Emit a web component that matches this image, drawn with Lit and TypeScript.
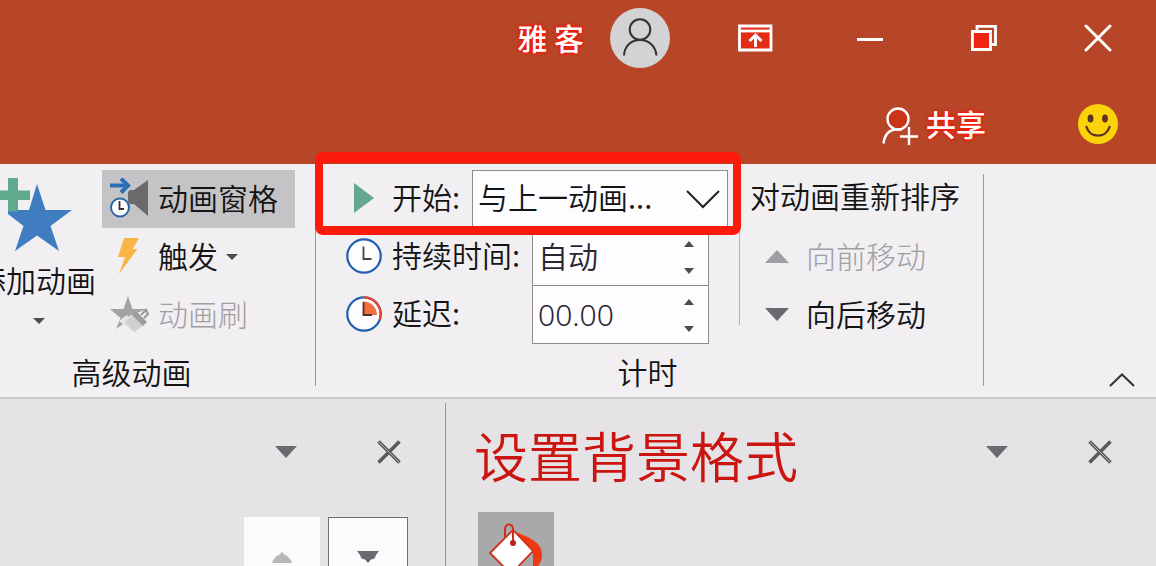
import { LitElement, html, css, svg } from "lit";
import { customElement, property } from "lit/decorators.js";

const triangle = (dir: "up" | "down", w: number, h: number) => html`
  <svg width=${w} height=${h} viewBox="0 0 20 10" preserveAspectRatio="none" aria-hidden="true">
    ${dir === "up"
      ? svg`<path d="M0 10 L10 0 L20 10Z" fill="currentColor"/>`
      : svg`<path d="M0 0 H20 L10 10Z" fill="currentColor"/>`}
  </svg>`;

const crossIcon = html`
  <svg width="24" height="24" viewBox="0 0 24 24" fill="none" aria-hidden="true">
    <path d="M1.500 1.500 22.500 22.500 M22.500 1.500 1.500 22.500" stroke="#5a5a5a" stroke-width="3.600"/>
    <path d="M2 2 22 22" stroke="#b4b4b4" stroke-width="1"/>
  </svg>`;

const base = css`
  * { box-sizing: border-box; }
  button, input, select {
    font: inherit;
    color: inherit;
    margin: 0;
    padding: 0;
    border: 0;
    border-radius: 0;
    background: none;
  }
  svg { display: block; flex: none; }
`;

@customElement("title-bar")
class TitleBar extends LitElement {
  static styles = [base, css`
    :host { display: block; background: #b74628; color: #fff; }
    .row { display: flex; align-items: center; justify-content: flex-end; }
    .window { height: 76px; padding-right: 1px; }
    .tools { height: 88px; padding: 8px 38px 0 0; align-items: center; }
    .name, .share-text {
      padding-bottom: 3px;
      font-weight: 500;
      text-shadow: 0 0 2px #ff1400, 0 0 3px #ff1400, 0 0 4px #ff1400;
      white-space: nowrap;
    }
    .name { margin-right: 26px; }
    .avatar {
      width: 60px;
      height: 60px;
      margin-right: 29px;
      border-radius: 50%;
      background: #d3d3d5;
    }
    .control {
      width: 114px;
      height: 76px;
      display: flex;
      align-items: center;
      justify-content: center;
    }
    .share { display: flex; align-items: center; gap: 8px; margin-right: 92px; }
    .share svg { margin-top: 4px; }
  `];

  render() {
    return html`
      <div class="row window">
        <span class="name">雅 客</span>
        <button class="avatar" aria-label="帐户">
          <svg width="60" height="60" viewBox="0 0 60 60" fill="none" stroke="#333" stroke-width="2">
            <circle cx="30" cy="21.500" r="10.300"/>
            <path d="M14 47.500C14.500 38 21 32 30 32S45.500 38 46.500 47.500"/>
          </svg>
        </button>
        <button class="control" aria-label="功能区显示选项">
          <svg width="36" height="28" viewBox="0 0 36 28" fill="none" stroke="#fff" stroke-width="2.800">
            <path d="M1.500 2H33V26H1.500Z" fill="#e22c14"/>
            <path d="M2 7H33"/>
            <path d="M17.500 23V11 M11.500 17 17.500 11 23.500 17" stroke-width="3"/>
          </svg>
        </button>
        <button class="control" aria-label="最小化">
          <svg width="28" height="28" viewBox="0 0 28 28"><path d="M1 15.500H27" stroke="#fff" stroke-width="3"/></svg>
        </button>
        <button class="control" aria-label="还原">
          <svg width="28" height="28" viewBox="0 0 28 28" fill="none" stroke="#fff" stroke-width="2.800">
            <path d="M7 6V2.400H25.500V20.500H22"/>
            <path d="M2.400 7.500H20.500V25.500H2.400Z" fill="#ec2410"/>
          </svg>
        </button>
        <button class="control" aria-label="关闭">
          <svg width="28" height="28" viewBox="0 0 28 28"><path d="M2 2 26 26M26 2 2 26" stroke="#fff" stroke-width="3" stroke-linecap="round"/></svg>
        </button>
      </div>
      <div class="row tools">
        <button class="share">
          <svg width="36" height="40" viewBox="0 0 36 40" fill="none" stroke="#fff" stroke-width="2.400">
            <circle cx="16" cy="13" r="10.500" fill="#cc3418"/>
            <path d="M1.500 37.500C2.500 29 7 24 14 23.500H20"/>
            <path d="M27 21V39M18 30.500H36"/>
          </svg>
          <span class="share-text">共享</span>
        </button>
        <svg width="40" height="40" viewBox="0 0 40 40" role="img" aria-label="反馈">
          <circle cx="20" cy="20" r="20" fill="#fcd208"/>
          <ellipse cx="12.500" cy="14.500" rx="2.900" ry="4" fill="#5b3226"/>
          <ellipse cx="27" cy="14.500" rx="2.900" ry="4" fill="#5b3226"/>
          <path d="M8.500 23C12 34.500 28 34.500 31.500 23" fill="none" stroke="#5b3226" stroke-width="2.400" stroke-linecap="round"/>
        </svg>
      </div>`;
  }
}

@customElement("spin-field")
class SpinField extends LitElement {
  @property() label = "";
  @property() value = "";

  static styles = [base, css`
    :host { display: block; }
    .row { display: flex; align-items: center; height: 58px; }
    .icon { width: 36px; margin: 0 10px 2px 0; }
    .text { width: 140px; padding-bottom: 7px; white-space: nowrap; }
    .box {
      display: flex;
      align-self: flex-start;
      width: 177px;
      height: 59px;
      margin-top: -1px;
      border: 1px solid #8c8c8e;
      background: #fdfcfe;
    }
    .input {
      flex: 1;
      min-width: 0;
      padding: 1px 0 0 5px;
      font-family: "Noto Sans", "Noto Sans CJK SC", sans-serif;
      color: #2a2530;
      outline: none;
    }
    .steps { width: 38px; padding-top: 2px; display: flex; flex-direction: column; color: #4c4c4e; }
    .step { flex: 1; display: flex; align-items: center; justify-content: center; }
  `];

  render() {
    return html`
      <div class="row">
        <span class="icon"><slot></slot></span>
        <label class="text" for="field">${this.label}</label>
        <div class="box">
          <input class="input" id="field" .value=${this.value} />
          <div class="steps">
            <button class="step" aria-label="增加">${triangle("up", 10, 6)}</button>
            <button class="step" aria-label="减少">${triangle("down", 10, 6)}</button>
          </div>
        </div>
      </div>`;
  }
}

@customElement("ribbon-bar")
class RibbonBar extends LitElement {
  static styles = [base, css`
    :host {
      display: flex;
      padding-top: 6px;
      background: #f1eff2;
      border-bottom: 2px solid #cbc9cc;
      color: #141414;
    }
    .group { display: flex; flex-direction: column; flex: none; }
    .advanced { margin-left: -50px; padding-left: 26px; }
    .body { display: flex; height: 174px; }
    .caption { height: 53px; padding: 5px 4px 0 0; line-height: 44px; text-align: center; }
    .advanced .caption { margin-left: -24px; }
    .divider { flex: none; width: 1px; margin: 4px 0 11px; background: #98979a; }
    .minor { margin: 4px 0 19px; background: #b4b2b6; }

    .add {
      width: 126px;
      display: flex;
      flex-direction: column;
      align-items: center;
      padding-top: 8px;
    }
    .add-text { align-self: flex-start; padding: 5px 0 17px; white-space: nowrap; }
    .stack { display: flex; flex-direction: column; margin-right: 20px; }
    .tool {
      display: flex;
      align-items: center;
      gap: 8px;
      width: 193px;
      height: 58px;
      padding: 0 0 4px 8px;
      white-space: nowrap;
    }
    .tool svg { margin-top: 4px; }
    .selected { background: #c4c3c5; }
    .disabled { color: #a09ea2; font-weight: 300; }
    .caret { color: #4c4c4e; }

    .timing { padding-left: 30px; width: 423px; position: relative; }
    .start { display: flex; align-items: center; height: 58px; }
    .slot { width: 36px; margin: 0 10px 2px 0; display: flex; justify-content: center; }
    .start-text { width: 80px; padding-bottom: 7px; white-space: nowrap; }
    .pick { display: grid; align-items: center; width: 256px; height: 58px; }
    .pick > * { grid-area: 1 / 1; }
    .select {
      appearance: none;
      width: 100%;
      height: 58px;
      padding: 0 44px 7px 5px;
      border: 1px solid #8c8c8e;
      background: #fdfcfe;
    }
    .chevron { justify-self: end; margin-right: 8px; pointer-events: none; }
    .highlight {
      position: absolute;
      inset: -18px -2px auto -1px;
      height: 83px;
      border: solid #fb1a0c;
      border-width: 11px 8px 9px 8px;
      border-radius: 8px;
      pointer-events: none;
    }

    .order { width: 243px; padding-left: 10px; }
    .order-title { height: 58px; line-height: 50px; white-space: nowrap; }
    .move {
      display: flex;
      align-items: center;
      gap: 17px;
      height: 58px;
      padding: 0 0 4px 15px;
      white-space: nowrap;
    }
    .move svg { margin-top: 2px; }
    .down { color: #6b696d; }
    .down-text { color: #141414; }
    .collapse {
      margin-left: auto;
      align-self: flex-end;
      width: 68px;
      height: 34px;
      display: flex;
      align-items: center;
      justify-content: center;
    }
  `];

  render() {
    return html`
      <section class="group advanced">
        <div class="body">
          <button class="add">
            <svg width="80" height="74" viewBox="-1 178 80 74">
              <path d="M37 184 45.500 210H72L50.500 226 59 251 37 235.500 15 251 23.500 226 8 214V210H29Z" fill="#3f7cc0"/>
              <path d="M8 178H18V190.500H30V200H18V211.500H8V200H-4V190.500H8Z" fill="#5fa98d"/>
            </svg>
            <span class="add-text">添加动画</span>
            <span class="caret">${triangle("down", 12, 6)}</span>
          </button>
          <div class="stack">
            <button class="tool selected">
              <svg width="40" height="42" viewBox="0 0 40 42" fill="none">
                <path d="M18 14 20 12H24L38 2V38L24 26H20L18 24Z" fill="#6b696b"/>
                <path d="M0 7.500H17" stroke="#2a70b8" stroke-width="4"/>
                <path d="M11 0.500 18 7.500 11 14.500" stroke="#2a70b8" stroke-width="4"/>
                <circle cx="10" cy="29.500" r="9" fill="#fff" stroke="#2a66a4" stroke-width="2"/>
                <path d="M9.500 23V31H14" stroke="#333" stroke-width="1.800"/>
              </svg>
              动画窗格
            </button>
            <button class="tool">
              <svg width="40" height="42" viewBox="0 0 40 42">
                <path d="M14 2H29L22.500 13H27.500L9 38 15 21H8Z" fill="#f6b545"/>
              </svg>
              触发<span class="caret">${triangle("down", 12, 6)}</span>
            </button>
            <button class="tool disabled" disabled>
              <svg width="40" height="42" viewBox="0 0 40 42" fill="none">
                <path d="M18 2 22.500 15H38L26 19 18 23 16 28 6 35 10.500 24 0 15H13.500Z" fill="#a4a2a5"/>
                <path d="M9 27 17 21 26 38 14 31Z" fill="#e9e7ea"/>
                <path d="M14 28 24 20 34 31 24 38Z" fill="#d2d0d3"/>
                <path d="M22 21 26 17 37 28 33 32Z" fill="#9d9b9e"/>
                <path d="M31 21 36 16 38 20 34 24" stroke="#9d9b9e" stroke-width="2.200"/>
              </svg>
              动画刷
            </button>
          </div>
        </div>
        <div class="caption">高级动画</div>
      </section>
      <div class="divider"></div>
      <section class="group">
        <div class="body">
          <div class="timing">
            <div class="start">
              <span class="slot">
                <svg width="20" height="32" viewBox="0 0 20 32"><path d="M0 1 20 16 0 31Z" fill="#64a98f"/></svg>
              </span>
              <label class="start-text" for="start">开始:</label>
              <div class="pick">
                <select class="select" id="start"><option>与上一动画...</option></select>
                <svg class="chevron" width="34" height="20" viewBox="0 0 34 20"><path d="M1 2 17 18 33 2" fill="none" stroke="#222" stroke-width="2"/></svg>
              </div>
            </div>
            <spin-field label="持续时间:" value="自动">
              <svg width="36" height="36" viewBox="0 0 36 36" fill="none">
                <circle cx="18" cy="18" r="16.700" fill="#fdfdff" stroke="#1f5fae" stroke-width="2.200"/>
                <path d="M17.500 8.500V21H25.500" stroke="#444" stroke-width="1.800"/>
              </svg>
            </spin-field>
            <spin-field label="延迟:" value="00.00">
              <svg width="36" height="36" viewBox="0 0 36 36" fill="none">
                <circle cx="18" cy="18" r="16.700" fill="#fdfdff" stroke="#1f5fae" stroke-width="2.200"/>
                <path d="M18 1.300A16.700 16.700 0 0 1 33.500 24" stroke="#e5452c" stroke-width="2.200"/>
                <path d="M17.500 5.500A13.500 13.500 0 0 1 31 19H17.500Z" fill="#f26f40"/>
                <path d="M17.500 6V19H26" stroke="#5a2a24" stroke-width="1.800"/>
              </svg>
            </spin-field>
            <div class="highlight"></div>
          </div>
          <div class="divider minor"></div>
          <div class="order">
            <div class="order-title">对动画重新排序</div>
            <button class="move disabled" disabled>${triangle("up", 24, 13)}<span>向前移动</span></button>
            <button class="move down">${triangle("down", 24, 13)}<span class="down-text">向后移动</span></button>
          </div>
        </div>
        <div class="caption">计时</div>
      </section>
      <div class="divider"></div>
      <button class="collapse" aria-label="折叠功能区">
        <svg width="26" height="14" viewBox="0 0 26 14"><path d="M1 13 13 1.500 25 13" fill="none" stroke="#333" stroke-width="2"/></svg>
      </button>`;
  }
}

@customElement("task-panes")
class TaskPanes extends LitElement {
  static styles = [base, css`
    :host { display: flex; flex: 1; min-height: 0; background: #e5e3e6; }
    .left { flex: 0 0 445px; }
    .right { flex: 1; min-width: 0; }
    .line { flex: none; width: 1px; margin-top: 4px; background: #98979a; }
    .head {
      display: flex;
      align-items: center;
      justify-content: flex-end;
      gap: 43px;
      height: 106px;
      padding-right: 26px;
    }
    .title {
      flex: 1;
      margin: 0;
      padding: 6px 0 0 28px;
      font-size: 54px;
      line-height: 80px;
      font-weight: 350;
      color: #cb1510;
      white-space: nowrap;
    }
    .action {
      width: 60px;
      height: 60px;
      display: flex;
      align-items: center;
      justify-content: center;
      color: #6b696d;
    }
    .moves { display: flex; justify-content: flex-end; gap: 8px; padding: 12px 37px 0 0; }
    .nudge {
      width: 80px;
      height: 80px;
      display: flex;
      align-items: center;
      justify-content: center;
      background: #fbfafc;
      border: 1px solid #6f6e71;
      color: #6b696d;
    }
    .off { width: 76px; border-color: #fbfafc; color: #b9b7ba; }
    .tabs { padding: 7px 0 0 32px; }
    .fill { width: 76px; height: 76px; background: #a9a8aa; }
  `];

  render() {
    return html`
      <section class="left">
        <div class="head">
          <button class="action" aria-label="窗格选项">${triangle("down", 22, 12)}</button>
          <button class="action" aria-label="关闭窗格">${crossIcon}</button>
        </div>
        <div class="moves">
          <button class="nudge off" disabled aria-label="上移">
            <svg width="20" height="11" viewBox="0 0 20 11"><path d="M0 11C1 7 4 4 7 3L10 0 13 3C16 4 19 7 20 11Z" fill="currentColor"/></svg>
          </button>
          <button class="nudge" aria-label="下移">
            <svg width="22" height="12" viewBox="0 0 22 12"><path d="M0 0H22L19 4 17.500 7.500 14 8.500 11 12 8 8.500 4.500 7.500 3 4Z" fill="currentColor"/></svg>
          </button>
        </div>
      </section>
      <div class="line"></div>
      <section class="right">
        <div class="head">
          <h1 class="title">设置背景格式</h1>
          <button class="action" aria-label="窗格选项">${triangle("down", 22, 12)}</button>
          <button class="action" aria-label="关闭窗格">${crossIcon}</button>
        </div>
        <div class="tabs">
          <button class="fill" aria-label="填充">
            <svg width="76" height="76" viewBox="0 0 76 76" fill="none">
              <path d="M38 20C52 26 64 30 64 43C64 50 60 55 55 60V42Z" fill="#ee3a12"/>
              <path d="M35 18 55 39 33 62 12 41Z" fill="#fff" stroke="#d22c1c" stroke-width="1.800"/>
              <path d="M27 25V17C27 11 35 11 35 17V31" stroke="#d22c1c" stroke-width="2"/>
              <circle cx="35" cy="31" r="3" fill="#b8241c"/>
            </svg>
          </button>
        </div>
      </section>`;
  }
}

@customElement("app-root")
class AppRoot extends LitElement {
  static styles = css`
    :host {
      display: flex;
      flex-direction: column;
      height: 100vh;
      overflow: hidden;
      font-family: "Noto Sans CJK SC", "Noto Sans", sans-serif;
      font-size: 30px;
      line-height: 44px;
      font-weight: 350;
    }
  `;

  render() {
    return html`
      <title-bar></title-bar>
      <ribbon-bar></ribbon-bar>
      <task-panes></task-panes>`;
  }
}
